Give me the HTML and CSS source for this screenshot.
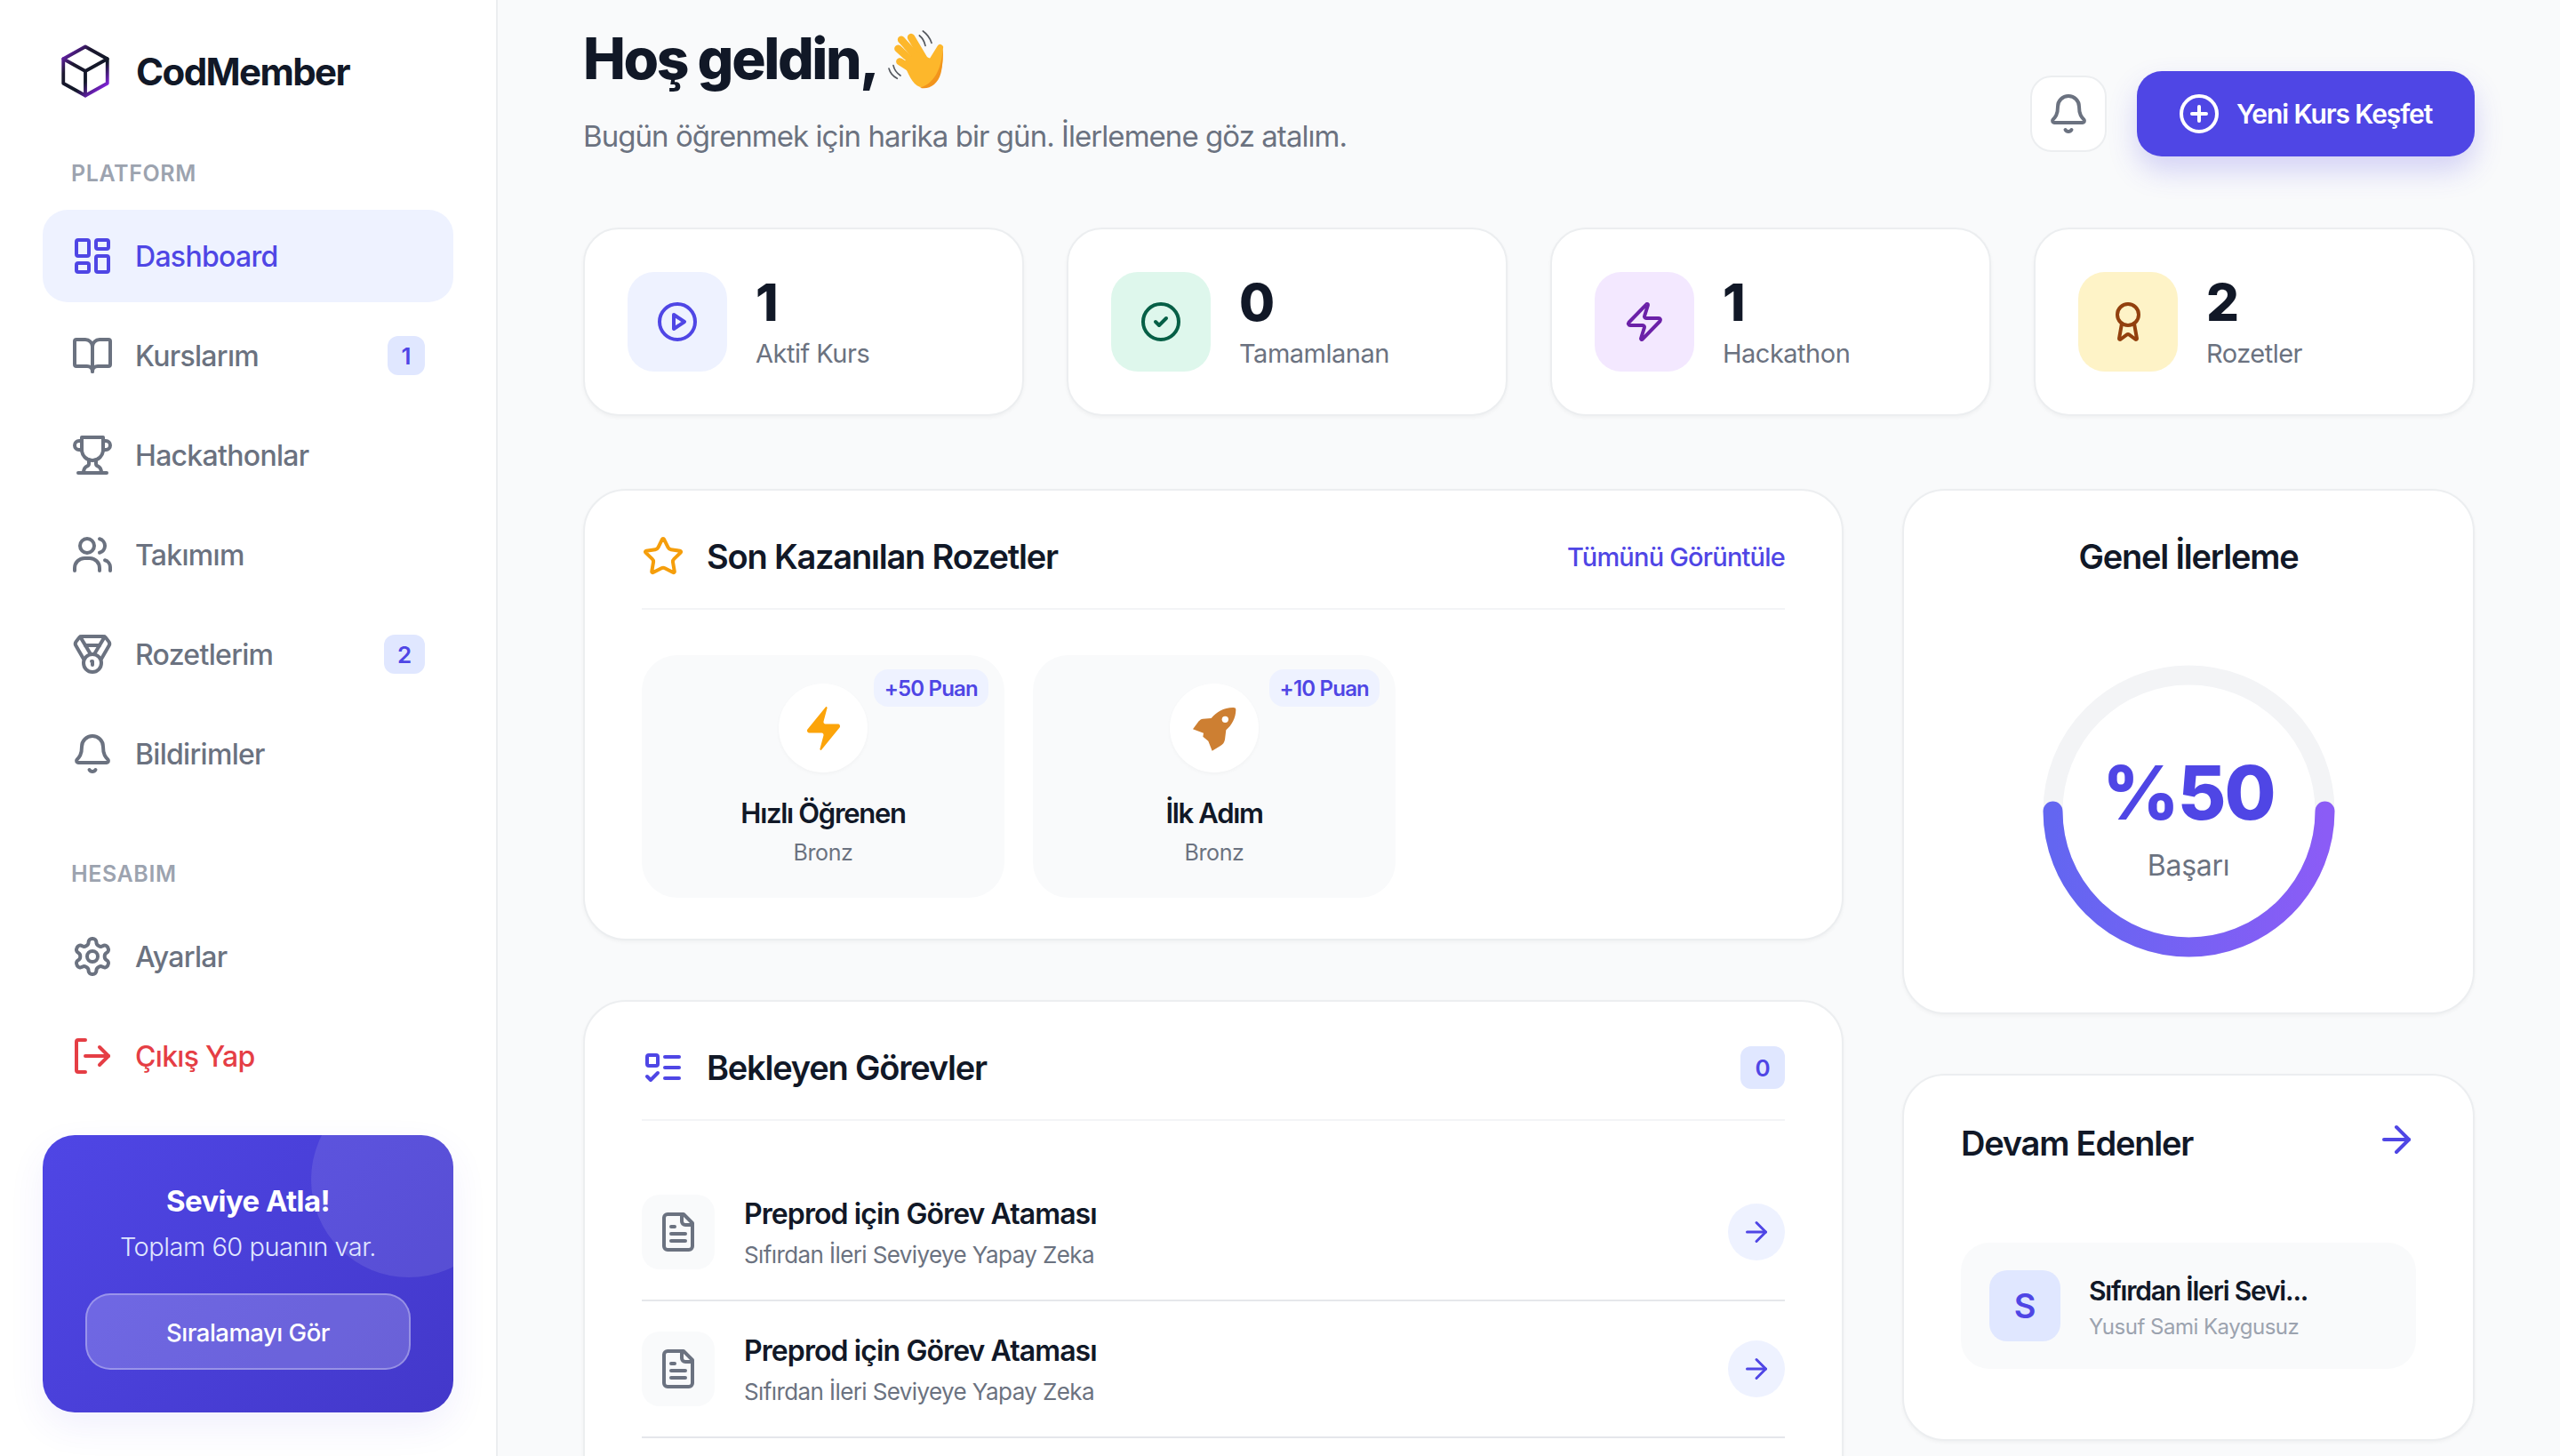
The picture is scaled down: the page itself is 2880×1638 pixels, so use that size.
FILE: index.html
```html
<!DOCTYPE html>
<html lang="tr">
<head>
<meta charset="utf-8">
<title>CodMember</title>
<link rel="stylesheet" href="styles.css">
</head>
<body>
<div class="app">
  <aside class="sidebar">
    <div class="brand">
      <svg class="brand-icon" viewBox="0 0 24 24" fill="none" stroke="url(#cube)" stroke-width="1.4" stroke-linejoin="round" stroke-linecap="round">
        <defs><linearGradient id="cube" gradientUnits="userSpaceOnUse" x1="3" y1="2" x2="21" y2="22"><stop offset="0" stop-color="#8b22e8"/><stop offset=".3" stop-color="#1c1830"/><stop offset=".62" stop-color="#111827"/><stop offset=".9" stop-color="#8b22e8"/></linearGradient></defs>
        <path d="M12 2l9 5v10l-9 5-9-5V7z"/><path d="M3 7l9 5 9-5"/><path d="M12 12v10"/>
      </svg>
      <span class="brand-name">CodMember</span>
    </div>
    <div class="nav-label">PLATFORM</div>
    <nav class="nav">
      <a class="nav-item active"><svg class="ico48" viewBox="0 0 24 24"><rect x="3" y="3" width="7" height="9" rx="1"/><rect x="14" y="3" width="7" height="5" rx="1"/><rect x="14" y="12" width="7" height="9" rx="1"/><rect x="3" y="16" width="7" height="5" rx="1"/></svg><span>Dashboard</span></a>
      <a class="nav-item"><svg class="ico48" viewBox="0 0 24 24"><path d="M12 7v14"/><path d="M3 18a1 1 0 0 1-1-1V4a1 1 0 0 1 1-1h5a4 4 0 0 1 4 4 4 4 0 0 1 4-4h5a1 1 0 0 1 1 1v13a1 1 0 0 1-1 1h-6a3 3 0 0 0-3 3 3 3 0 0 0-3-3z"/></svg><span>Kurslarım</span><b class="nav-chip">1</b></a>
      <a class="nav-item"><svg class="ico48" viewBox="0 0 24 24"><path d="M6 9H4.5a2.5 2.5 0 0 1 0-5H6"/><path d="M18 9h1.5a2.5 2.5 0 0 0 0-5H18"/><path d="M4 22h16"/><path d="M10 14.66V17c0 .55-.47.98-.97 1.21C7.85 18.75 7 20.24 7 22"/><path d="M14 14.66V17c0 .55.47.98.97 1.21C16.15 18.75 17 20.24 17 22"/><path d="M18 2H6v7a6 6 0 0 0 12 0V2Z"/></svg><span>Hackathonlar</span></a>
      <a class="nav-item"><svg class="ico48" viewBox="0 0 24 24"><path d="M2 21v-1.5A5.5 5.5 0 0 1 7.5 14h3a5.5 5.5 0 0 1 5.5 5.5V21"/><circle cx="9" cy="7" r="4"/><path d="M22 21v-2a4 4 0 0 0-3-3.87"/><path d="M16 3.13a4 4 0 0 1 0 7.75"/></svg><span>Takımım</span></a>
      <a class="nav-item"><svg class="ico48" viewBox="0 0 24 24"><path d="M7.21 15 2.66 7.14a2 2 0 0 1 .13-2.2L4.4 2.8A2 2 0 0 1 6 2h12a2 2 0 0 1 1.6.8l1.6 2.14a2 2 0 0 1 .14 2.2L16.79 15"/><path d="M11 12 5.12 2.2"/><path d="m13 12 5.88-9.8"/><path d="M8 7h8"/><circle cx="12" cy="17" r="5"/><path d="M12 18v-2h-.5"/></svg><span>Rozetlerim</span><b class="nav-chip wide">2</b></a>
      <a class="nav-item"><svg class="ico48" viewBox="0 0 24 24"><path d="M10.268 21a2 2 0 0 0 3.464 0"/><path d="M3.262 15.326A1 1 0 0 0 4 17h16a1 1 0 0 0 .74-1.673C19.41 13.956 18 12.499 18 8A6 6 0 0 0 6 8c0 4.499-1.411 5.956-2.738 7.326"/></svg><span>Bildirimler</span></a>
    </nav>
    <div class="nav-label second">HESABIM</div>
    <nav class="nav">
      <a class="nav-item"><svg class="ico48" viewBox="0 0 24 24"><path d="M12.22 2h-.44a2 2 0 0 0-2 2v.18a2 2 0 0 1-1 1.73l-.43.25a2 2 0 0 1-2 0l-.15-.08a2 2 0 0 0-2.73.73l-.22.38a2 2 0 0 0 .73 2.73l.15.1a2 2 0 0 1 1 1.72v.51a2 2 0 0 1-1 1.74l-.15.09a2 2 0 0 0-.73 2.73l.22.38a2 2 0 0 0 2.73.73l.15-.08a2 2 0 0 1 2 0l.43.25a2 2 0 0 1 1 1.73V20a2 2 0 0 0 2 2h.44a2 2 0 0 0 2-2v-.18a2 2 0 0 1 1-1.73l.43-.25a2 2 0 0 1 2 0l.15.08a2 2 0 0 0 2.73-.73l.22-.39a2 2 0 0 0-.73-2.73l-.15-.08a2 2 0 0 1-1-1.74v-.5a2 2 0 0 1 1-1.74l.15-.09a2 2 0 0 0 .73-2.73l-.22-.38a2 2 0 0 0-2.73-.73l-.15.08a2 2 0 0 1-2 0l-.43-.25a2 2 0 0 1-1-1.73V4a2 2 0 0 0-2-2z"/><circle cx="12" cy="12" r="3"/></svg><span>Ayarlar</span></a>
      <a class="nav-item danger"><svg class="ico48" viewBox="0 0 24 24"><path d="M8 3H4a1 1 0 0 0-1 1v16a1 1 0 0 0 1 1h4"/><path d="M8 12h13"/><path d="m16 7 5 5-5 5"/></svg><span>Çıkış Yap</span></a>
    </nav>
    <div class="promo">
      <div class="promo-bubble"></div>
      <div class="promo-title">Seviye Atla!</div>
      <div class="promo-sub">Toplam 60 puanın var.</div>
      <div class="promo-btn">Sıralamayı Gör</div>
    </div>
  </aside>

  <main class="main">
    <header class="header">
      <div class="intro">
        <h1 class="hello"><span class="hello-text">Hoş geldin,</span>
          <svg class="wave" viewBox="0 0 240 225" aria-label="el sallama">
            <g fill="none" stroke="#55595f" stroke-width="5" stroke-linecap="round"><path d="M124 30c10 8 17 20 20 34"/><path d="M136 15c14 10 24 24 29 40"/><path d="M36 131c3 14 12 26 24 34"/><path d="M21 141c4 15 15 27 28 34"/></g>
            <g fill="none" stroke="#fdb72b" stroke-width="25" stroke-linecap="round"><path d="M140 110 96 36"/><path d="M124 112 63 44"/><path d="M112 128 52 74"/><path d="M112 152 58 118"/><path d="M168 112l26-42" stroke-width="20"/></g>
            <path d="M70 120l45-35 40 20 13 5 35-40c2 30 0 60-8 85-10 35-40 55-70 48-25-8-40-45-55-83z" fill="#fdb72b"/>
            <path d="M126 206c30 8 60-12 70-48 6-22 8-52 7-90-1 30-6 60-18 84-12 26-32 46-59 54z" fill="#f2941c"/>
          </svg>
        </h1>
        <p class="lead">Bugün öğrenmek için harika bir gün. İlerlemene göz atalım.</p>
      </div>
      <div class="actions">
        <button class="bell-btn"><svg class="ico48" viewBox="0 0 24 24"><path d="M10.268 21a2 2 0 0 0 3.464 0"/><path d="M3.262 15.326A1 1 0 0 0 4 17h16a1 1 0 0 0 .74-1.673C19.41 13.956 18 12.499 18 8A6 6 0 0 0 6 8c0 4.499-1.411 5.956-2.738 7.326"/></svg></button>
        <button class="cta"><svg class="ico48" viewBox="0 0 24 24"><circle cx="12" cy="12" r="10"/><path d="M8 12h8"/><path d="M12 8v8"/></svg><span>Yeni Kurs Keşfet</span></button>
      </div>
    </header>

    <section class="stats">
      <div class="stat"><div class="stat-ico blue"><svg class="ico48" viewBox="0 0 24 24"><circle cx="12" cy="12" r="10"/><path d="M10 8l6 4-6 4z"/></svg></div><div><div class="stat-num">1</div><div class="stat-label">Aktif Kurs</div></div></div>
      <div class="stat"><div class="stat-ico green"><svg class="ico48" viewBox="0 0 24 24"><circle cx="12" cy="12" r="10"/><path d="m9 12 2 2 4-4"/></svg></div><div><div class="stat-num">0</div><div class="stat-label">Tamamlanan</div></div></div>
      <div class="stat"><div class="stat-ico purple"><svg class="ico48" viewBox="0 0 24 24"><path d="M4 14a1 1 0 0 1-.78-1.63l9.9-10.2a.5.5 0 0 1 .86.46l-1.92 6.02A1 1 0 0 0 13 10h7a1 1 0 0 1 .78 1.63l-9.9 10.2a.5.5 0 0 1-.86-.46l1.92-6.02A1 1 0 0 0 11 14z"/></svg></div><div><div class="stat-num">1</div><div class="stat-label">Hackathon</div></div></div>
      <div class="stat"><div class="stat-ico amber"><svg class="ico48" viewBox="0 0 24 24"><path d="m15.477 12.89 1.515 8.526a.5.5 0 0 1-.81.47l-3.58-2.687a1 1 0 0 0-1.197 0l-3.586 2.686a.5.5 0 0 1-.81-.469l1.514-8.526"/><circle cx="12" cy="8" r="6"/></svg></div><div><div class="stat-num">2</div><div class="stat-label">Rozetler</div></div></div>
    </section>

    <section class="columns">
      <div class="col">
        <article class="panel badges-panel">
          <div class="panel-head">
            <svg class="ico48 star" viewBox="0 0 24 24"><path d="M11.5 2.3a.53.53 0 0 1 1 0l2.3 4.67a2.12 2.12 0 0 0 1.6 1.16l5.17.76a.53.53 0 0 1 .3.9l-3.74 3.64a2.12 2.12 0 0 0-.61 1.88l.88 5.14a.53.53 0 0 1-.77.56l-4.62-2.43a2.12 2.12 0 0 0-1.97 0L6.4 21.01a.53.53 0 0 1-.77-.56l.88-5.14a2.12 2.12 0 0 0-.61-1.88L2.16 9.79a.53.53 0 0 1 .3-.9l5.17-.76a2.12 2.12 0 0 0 1.6-1.16z"/></svg>
            <h2 class="panel-title">Son Kazanılan Rozetler</h2>
            <a class="panel-link">Tümünü Görüntüle</a>
          </div>
          <div class="badge-row">
            <div class="badge-card">
              <span class="points">+50 Puan</span>
              <div class="badge-circle"><svg class="bolt" viewBox="3 2 18 20" preserveAspectRatio="none"><path fill="#fca40a" d="M4 14a1 1 0 0 1-.78-1.63l9.9-10.2a.5.5 0 0 1 .86.46l-1.92 6.02A1 1 0 0 0 13 10h7a1 1 0 0 1 .78 1.63l-9.9 10.2a.5.5 0 0 1-.86-.46l1.92-6.02A1 1 0 0 0 11 14z"/></svg></div>
              <div class="badge-name">Hızlı Öğrenen</div>
              <div class="badge-tier">Bronz</div>
            </div>
            <div class="badge-card">
              <span class="points">+10 Puan</span>
              <div class="badge-circle"><svg class="rocket" viewBox="0 0 240 225"><path fill="#cd7f32" d="M193 50C194 44 190 42 184 42 150 42 128 58 110 78L82 80C76 80 72 84 68 88L48 115 84 128 82 140 100 155 113 188 140 172C150 166 154 160 156 150L160 118C180 100 192 78 193 50Z"/><circle cx="157" cy="82" r="11" fill="#fff"/></svg></div>
              <div class="badge-name">İlk Adım</div>
              <div class="badge-tier">Bronz</div>
            </div>
          </div>
        </article>

        <article class="panel tasks-panel">
          <div class="panel-head">
            <svg class="ico48 todo" viewBox="0 0 24 24"><rect x="3" y="5" width="6" height="6" rx="1"/><path d="m3 17 2 2 4-4"/><path d="M13 6h8"/><path d="M13 12h8"/><path d="M13 18h8"/></svg>
            <h2 class="panel-title">Bekleyen Görevler</h2>
            <span class="count">0</span>
          </div>
          <div class="tasks">
            <div class="task">
              <div class="task-ico"><svg class="ico48" viewBox="0 0 24 24"><path d="M15 2H6a2 2 0 0 0-2 2v16a2 2 0 0 0 2 2h12a2 2 0 0 0 2-2V7Z"/><path d="M14 2v4a2 2 0 0 0 2 2h4"/><path d="M10 9H8"/><path d="M16 13H8"/><path d="M16 17H8"/></svg></div>
              <div class="task-body"><div class="task-title">Preprod için Görev Ataması</div><div class="task-sub">Sıfırdan İleri Seviyeye Yapay Zeka</div></div>
              <div class="task-go"><svg class="ico36" viewBox="0 0 24 24"><path d="M5 12h14"/><path d="m12 5 7 7-7 7"/></svg></div>
            </div>
            <div class="task">
              <div class="task-ico"><svg class="ico48" viewBox="0 0 24 24"><path d="M15 2H6a2 2 0 0 0-2 2v16a2 2 0 0 0 2 2h12a2 2 0 0 0 2-2V7Z"/><path d="M14 2v4a2 2 0 0 0 2 2h4"/><path d="M10 9H8"/><path d="M16 13H8"/><path d="M16 17H8"/></svg></div>
              <div class="task-body"><div class="task-title">Preprod için Görev Ataması</div><div class="task-sub">Sıfırdan İleri Seviyeye Yapay Zeka</div></div>
              <div class="task-go"><svg class="ico36" viewBox="0 0 24 24"><path d="M5 12h14"/><path d="m12 5 7 7-7 7"/></svg></div>
            </div>
          </div>
        </article>
      </div>

      <div class="col">
        <article class="panel progress-panel">
          <h2 class="panel-title centered">Genel İlerleme</h2>
          <div class="ring">
            <svg class="ring-svg" viewBox="0 0 329 329" fill="none">
              <defs><linearGradient id="arc" x1="0" y1="0" x2="1" y2="0"><stop offset="0" stop-color="#6366f1"/><stop offset="1" stop-color="#8b5cf6"/></linearGradient></defs>
              <circle cx="164.500" cy="164.500" r="153" stroke="#f3f4f6" stroke-width="22"/>
              <path d="M11.500 164.500A153 153 0 0 0 317.500 164.500" stroke="url(#arc)" stroke-width="22" stroke-linecap="round"/>
            </svg>
            <div class="ring-text"><div class="ring-value">%50</div><div class="ring-label">Başarı</div></div>
          </div>
        </article>

        <article class="panel ongoing-panel">
          <div class="ongoing-head">
            <h2 class="panel-title">Devam Edenler</h2>
            <svg class="ico48 go" viewBox="0 0 24 24"><path d="M5 12h14"/><path d="m12 5 7 7-7 7"/></svg>
          </div>
          <div class="course">
            <div class="course-letter">S</div>
            <div class="course-body"><div class="course-title">Sıfırdan İleri Sevi...</div><div class="course-author">Yusuf Sami Kaygusuz</div></div>
          </div>
        </article>
      </div>
    </section>
  </main>
</div>
</body>
</html>
```

FILE: styles.css
```css
* { box-sizing: border-box; }
html, body { margin: 0; height: 1638px; overflow: hidden; }
body { font-family: Inter, "Noto Sans", "Liberation Sans", sans-serif; background: #f9fafb; color: #111827; }
h1, h2, p { margin: 0; }
button { font: inherit; cursor: pointer; }

.ico48, .ico36 { fill: none; stroke: currentColor; stroke-width: 2; stroke-linecap: round; stroke-linejoin: round; flex: none; }
.ico48 { width: 48px; height: 48px; }
.ico36 { width: 36px; height: 36px; }

.app { display: flex; height: 1638px; }

/* Sidebar */
.sidebar { width: 560px; flex: none; height: 100%; background: #fff; border-right: 2px solid #eceef0; padding: 48px 48px 0; }
.brand { display: flex; align-items: center; gap: 24px; height: 64px; margin-left: 15px; }
.brand-icon { width: 66px; height: 66px; flex: none; }
.brand-name { font-size: 42px; font-weight: 700; letter-spacing: -1.6px; color: #111827; }
.nav-label { font-size: 25px; font-weight: 600; letter-spacing: .6px; color: #9ca3af; line-height: 30px; margin: 68px 0 26px 32px; }
.nav-label.second { margin: 68px 0 26px 32px; }
.nav { display: flex; flex-direction: column; gap: 8px; }
.nav-item { display: flex; align-items: center; gap: 24px; height: 104px; padding: 0 32px; border-radius: 28px; font-size: 32px; font-weight: 500; letter-spacing: -.7px; color: #6b7280; }
.nav-item.active { background: #eef2ff; color: #4f46e5; }
.nav-item.danger { color: #e53e45; }
.nav-chip { margin-left: auto; width: 42px; height: 44px; display: flex; align-items: center; justify-content: center; background: #e0e7ff; color: #4f46e5; border-radius: 12px; font-size: 26px; font-weight: 600; letter-spacing: 0; }
.nav-chip.wide { width: 46px; }

.promo { position: relative; overflow: hidden; margin-top: 37px; height: 312px; padding: 47px 48px 0; border-radius: 36px; background: linear-gradient(135deg, #4f46e5, #4338ca); box-shadow: 0 16px 40px rgba(79, 70, 229, .08); color: #fff; text-align: center; }
.promo-bubble { position: absolute; top: -60px; right: -60px; width: 220px; height: 220px; border-radius: 50%; background: rgba(255, 255, 255, .1); }
.promo-title { position: relative; font-size: 33px; font-weight: 700; line-height: 54px; letter-spacing: -.6px; }
.promo-sub { position: relative; font-size: 29px; font-weight: 300; line-height: 46px; margin-top: 2px; letter-spacing: -.5px; color: #e0e7ff; }
.promo-btn { position: relative; height: 86px; margin-top: 29px; padding-top: 2px; display: flex; align-items: center; justify-content: center; font-size: 27.500px; font-weight: 500; letter-spacing: -.5px; background: rgba(255, 255, 255, .2); border: 2px solid rgba(255, 255, 255, .3); border-radius: 28px; }

/* Main */
.main { flex: 1; min-width: 0; padding: 27px 96px 0; }
.header { display: flex; justify-content: space-between; align-items: flex-start; height: 229px; }
.hello { display: flex; align-items: center; gap: 6px; height: 80px; font-size: 64px; font-weight: 800; letter-spacing: -2.4px; color: #111827; }
.hello-text { margin-top: -3px; }
.wave { width: 80px; height: 75px; flex: none; }
.lead { margin-top: 23px; font-size: 33px; font-weight: 400; line-height: 46px; letter-spacing: -.95px; color: #6b7280; }
.actions { display: flex; align-items: center; gap: 34px; margin-top: 53px; }
.bell-btn { width: 86px; height: 86px; padding: 0; display: flex; align-items: center; justify-content: center; background: #fff; border: 2px solid #eceef0; border-radius: 24px; color: #6b7280; }
.cta { height: 96px; width: 380px; padding: 0 0 0 46px; display: flex; align-items: center; gap: 18px; background: #4f46e5; color: #fff; border: 0; border-radius: 28px; font-size: 30px; font-weight: 600; letter-spacing: -1.1px; box-shadow: 0 16px 32px rgba(79, 70, 229, .22); }

.stats { display: grid; grid-template-columns: repeat(4, 1fr); gap: 48px; }
.stat { display: flex; align-items: center; gap: 32px; height: 212px; padding: 0 48px; background: #fff; border: 2px solid #eceef0; border-radius: 40px; box-shadow: 0 2px 4px rgba(0, 0, 0, .04); }
.stat-ico { width: 112px; height: 112px; flex: none; display: flex; align-items: center; justify-content: center; border-radius: 30px; }
.stat-ico.blue { background: #eef2ff; color: #4f46e5; }
.stat-ico.green { background: #def7ec; color: #065f46; }
.stat-ico.purple { background: #f3e8ff; color: #6b21a8; }
.stat-ico.amber { background: #fef3c7; color: #92400e; }
.stat-num { font-size: 58px; font-weight: 800; line-height: 70px; color: #111827; }
.stat-label { font-size: 29px; line-height: 44px; letter-spacing: -.5px; color: #6b7280; margin-top: 1px; }

.columns { display: grid; grid-template-columns: 1fr 644px; gap: 66px; align-items: start; margin-top: 82px; }
.col { display: flex; flex-direction: column; gap: 67px; min-width: 0; }
.panel { background: #fff; border: 2px solid #eceef0; border-radius: 48px; box-shadow: 0 2px 4px rgba(0, 0, 0, .04); }
.panel-title { font-size: 38px; font-weight: 600; line-height: 50px; letter-spacing: -1.2px; color: #111827; }
.panel-title.centered { text-align: center; }
.panel-head { display: flex; align-items: center; gap: 25px; height: 134px; padding-top: 16px; border-bottom: 2px solid #f3f4f6; }

.badges-panel { height: 508px; padding: 0 64px; }
.star { color: #f59e0b; }
.panel-link { margin-left: auto; font-size: 29px; font-weight: 500; letter-spacing: -.8px; color: #4f46e5; }
.badge-row { display: flex; gap: 32px; margin-top: 51px; }
.badge-card { position: relative; width: 408px; height: 273px; padding-top: 32px; border-radius: 40px; background: #f9fafb; text-align: center; }
.points { position: absolute; top: 16px; right: 18px; height: 42px; padding: 0 12px; display: flex; align-items: center; border-radius: 16px; background: #eef2ff; color: #4f46e5; font-size: 24px; font-weight: 600; letter-spacing: -.8px; }
.badge-circle { width: 100px; height: 100px; margin: 0 auto; display: flex; align-items: center; justify-content: center; border-radius: 50%; background: #fff; box-shadow: 0 2px 4px rgba(0, 0, 0, .03); }
.bolt { width: 37px; height: 49px; }
.rocket { width: 80px; height: 75px; flex: none; }
.badge-name { margin-top: 26px; font-size: 31px; font-weight: 600; line-height: 40px; letter-spacing: -1.3px; color: #111827; }
.badge-tier { margin-top: 6px; font-size: 25px; line-height: 36px; letter-spacing: -.4px; color: #6b7280; }

.tasks-panel { height: 800px; padding: 0 64px; }
.todo { color: #4f46e5; }
.count { margin-left: auto; width: 50px; height: 48px; display: flex; align-items: center; justify-content: center; border-radius: 12px; background: #e0e7ff; color: #4f46e5; font-size: 26px; font-weight: 600; }
.tasks { padding-top: 49px; }
.task { display: flex; align-items: center; gap: 33px; height: 154px; border-bottom: 2px solid #e5e7eb; }
.task-ico { width: 82px; height: 84px; flex: none; display: flex; align-items: center; justify-content: center; border-radius: 20px; background: #f9fafb; color: #6b7280; }
.task-body { flex: 1; padding-top: 4px; }
.task-title { font-size: 32px; font-weight: 600; line-height: 44px; letter-spacing: -.9px; color: #111827; }
.task-sub { font-size: 26px; line-height: 40px; letter-spacing: -.6px; color: #6b7280; margin-top: 4px; }
.task-go { width: 64px; height: 64px; flex: none; display: flex; align-items: center; justify-content: center; border-radius: 50%; background: #eef2ff; color: #4f46e5; }

.progress-panel { height: 591px; padding-top: 49px; }
.ring { position: relative; width: 329px; height: 329px; margin: 97px auto 0; }
.ring-svg { display: block; width: 329px; height: 329px; }
.ring-text { position: absolute; inset: 0; display: flex; flex-direction: column; align-items: center; padding-top: 89px; }
.ring-value { font-size: 84px; font-weight: 800; line-height: 110px; color: #4f46e5; letter-spacing: -2px; }
.ring-label { font-size: 32px; line-height: 44px; letter-spacing: -.3px; color: #6b7280; margin-top: 5px; }

.ongoing-panel { height: 413px; padding: 0 64px; }
.ongoing-head { display: flex; align-items: flex-start; justify-content: space-between; height: 188px; padding-top: 51px; }
.go { color: #4f46e5; margin: -3px -2px 0 0; }
.course { display: flex; align-items: center; gap: 32px; height: 142px; padding: 0 32px; border-radius: 32px; background: #f9fafb; }
.course-letter { width: 80px; height: 80px; flex: none; display: flex; align-items: center; justify-content: center; border-radius: 20px; background: #e0e7ff; color: #4f46e5; font-size: 38px; font-weight: 600; }
.course-body { padding-top: 4px; }
.course-title { font-size: 30px; font-weight: 600; line-height: 40px; letter-spacing: -1.2px; color: #111827; }
.course-author { font-size: 24px; line-height: 34px; letter-spacing: -.5px; color: #9ca3af; margin-top: 4px; }
```
